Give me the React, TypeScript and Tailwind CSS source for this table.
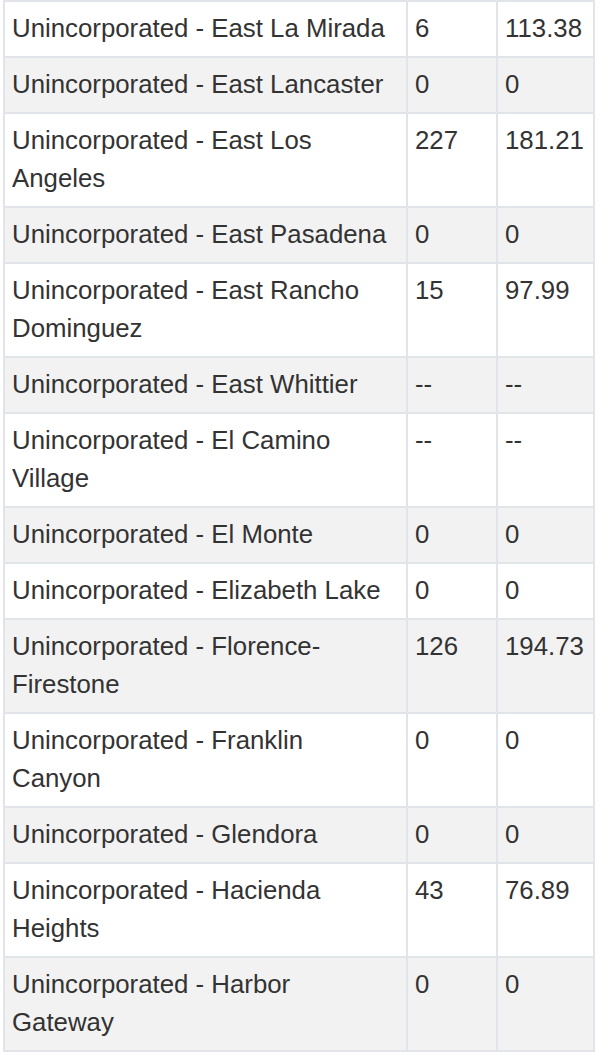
const rows: [string, string, string][] = [
  ["Unincorporated - East La Mirada", "6", "113.38"],
  ["Unincorporated - East Lancaster", "0", "0"],
  ["Unincorporated - East Los Angeles", "227", "181.21"],
  ["Unincorporated - East Pasadena", "0", "0"],
  ["Unincorporated - East Rancho Dominguez", "15", "97.99"],
  ["Unincorporated - East Whittier", "--", "--"],
  ["Unincorporated - El Camino Village", "--", "--"],
  ["Unincorporated - El Monte", "0", "0"],
  ["Unincorporated - Elizabeth Lake", "0", "0"],
  ["Unincorporated - Florence-Firestone", "126", "194.73"],
  ["Unincorporated - Franklin Canyon", "0", "0"],
  ["Unincorporated - Glendora", "0", "0"],
  ["Unincorporated - Hacienda Heights", "43", "76.89"],
  ["Unincorporated - Harbor Gateway", "0", "0"],
];

export default function App() {
  return (
    <div className="w-[600px] h-[1052px] overflow-hidden bg-white pl-[3px]">
      <table className="table-fixed border-collapse w-[590px] font-['Liberation_Sans',Arial,sans-serif] text-[25.8px] leading-[38px] text-[#333]">
        <colgroup>
          <col className="w-[403px]" />
          <col className="w-[90px]" />
          <col className="w-[97px]" />
        </colgroup>
        <tbody>
          {rows.map(([name, count, rate], i) => (
            <tr key={name} className={i % 2 === 1 ? "bg-[#f2f2f2]" : "bg-white"}>
              <td className="border-2 border-[#e1e4e8] pl-[7px] pr-[10px] pt-[7px] pb-[9px] align-top">
                {name}
              </td>
              <td className="border-2 border-[#e1e4e8] px-[7px] pt-[7px] pb-[9px] align-top">
                {count}
              </td>
              <td className="border-2 border-[#e1e4e8] px-[7px] pt-[7px] pb-[9px] align-top">
                {rate}
              </td>
            </tr>
          ))}
        </tbody>
      </table>
    </div>
  );
}
